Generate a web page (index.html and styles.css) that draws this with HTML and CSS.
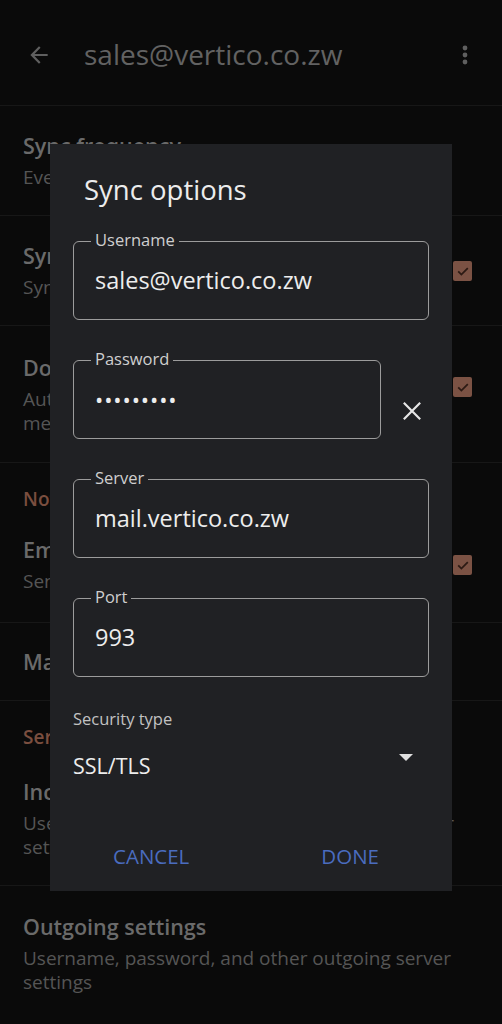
FILE: index.html
```html
<!DOCTYPE html>
<html>
<head>
<meta charset="utf-8">
<link rel="stylesheet" href="styles.css">
</head>
<body>
<div class="screen">
  <header class="appbar">
    <svg class="back" width="26" height="26" viewBox="0 0 24 24"><path d="M20 11H7.83l5.59-5.59L12 4l-8 8 8 8 1.41-1.41L7.83 13H20v-2z" fill="#5f5f5f"/></svg>
    <div class="appbar-title">sales@vertico.co.zw</div>
    <svg class="more" width="8" height="24" viewBox="0 0 8 24"><circle cx="4" cy="5" r="2.4" fill="#5f5f5f"/><circle cx="4" cy="12" r="2.4" fill="#5f5f5f"/><circle cx="4" cy="19" r="2.4" fill="#5f5f5f"/></svg>
  </header>

  <div class="row r-freq">
    <div class="row-text"><div class="row-title">Sync frequency</div><div class="row-sub">Every 15 minutes</div></div>
  </div>
  <div class="row r-sync">
    <div class="row-text"><div class="row-title">Sync email</div><div class="row-sub">Sync mail from this account</div></div>
    <span class="check"><svg width="20" height="20" viewBox="0 0 20 20"><path d="M4 10.5l4 4 8-8" stroke="#2c1a14" stroke-width="2.2" fill="none"/></svg></span>
  </div>
  <div class="row r-dl">
    <div class="row-text"><div class="row-title">Download attachments</div><div class="row-sub">Auto-download attachments to recent messages via Wi-Fi</div></div>
    <span class="check"><svg width="20" height="20" viewBox="0 0 20 20"><path d="M4 10.5l4 4 8-8" stroke="#2c1a14" stroke-width="2.2" fill="none"/></svg></span>
  </div>
  <div class="section">
    <div class="section-head">Notifications</div>
    <div class="row r-notif">
      <div class="row-text"><div class="row-title">Email notifications</div><div class="row-sub">Send notifications for new mail</div></div>
      <span class="check"><svg width="20" height="20" viewBox="0 0 20 20"><path d="M4 10.5l4 4 8-8" stroke="#2c1a14" stroke-width="2.2" fill="none"/></svg></span>
    </div>
  </div>
  <div class="row r-labels">
    <div class="row-text"><div class="row-title">Manage labels</div></div>
  </div>
  <div class="section">
    <div class="section-head">Server settings</div>
    <div class="row r-in">
      <div class="row-text"><div class="row-title">Incoming settings</div><div class="row-sub">Username, password, and other incoming server settings</div></div>
    </div>
  </div>
  <div class="row r-out">
    <div class="row-text"><div class="row-title">Outgoing settings</div><div class="row-sub">Username, password, and other outgoing server settings</div></div>
  </div>

  <div class="dialog">
    <h2 class="dialog-title">Sync options</h2>
    <div class="fields">
      <div class="field"><span class="field-label">Username</span><span class="field-value">sales@vertico.co.zw</span></div>
      <div class="field-row">
        <div class="field short"><span class="field-label">Password</span><span class="field-value dots">•••••••••</span></div>
        <svg class="clear" width="22" height="22" viewBox="0 0 22 22"><path d="M2 2L20 20M20 2L2 20" stroke="#e6e6e6" stroke-width="2.4"/></svg>
      </div>
      <div class="field"><span class="field-label">Server</span><span class="field-value">mail.vertico.co.zw</span></div>
      <div class="field"><span class="field-label">Port</span><span class="field-value">993</span></div>
    </div>
    <div class="security">
      <div class="sec-label">Security type</div>
      <div class="sec-select"><span class="sec-value">SSL/TLS</span><svg width="14" height="8" viewBox="0 0 14 8"><path d="M0 0h14L7 7z" fill="#e0e0e0"/></svg></div>
    </div>
    <div class="actions">
      <span class="btn cancel">CANCEL</span>
      <span class="btn done">DONE</span>
    </div>
  </div>
</div>
</body>
</html>
```

FILE: styles.css
```css
* { box-sizing: border-box; }
html, body { margin: 0; padding: 0; background: #0a0a0a; }
body { font-family: "Open Sans", Roboto, sans-serif; }
.screen { position: relative; width: 502px; height: 1024px; overflow: hidden; background: #0a0a0a; }

.appbar { height: 106px; display: flex; align-items: center; padding: 0 0 0 26px; border-bottom: 1px solid #171717; }
.back { margin-top: 4px; }
.appbar-title { margin-left: 32px; font-size: 28px; color: #626262; flex: 1; margin-top: 2px; }
.more { margin-right: 33px; margin-top: 4px; }

.row { display: flex; align-items: center; padding: 0 30px 0 23px; border-bottom: 1px solid #171717; }
.row-text { flex: 1; }
.row-title { font-size: 21.5px; color: #6a6a6a; font-weight: 600; line-height: 28px; }
.row-sub { font-size: 19px; color: #555; line-height: 24px; margin-top: 5px; }
.check { width: 19px; height: 20px; background: #7b5244; border-radius: 2px; display: flex; align-items: center; justify-content: center; }
.check svg { width: 16px; height: 16px; }

.r-freq { height: 110px; }
.r-sync { height: 110px; }
.r-dl { height: 137px; }
.r-dl .row-sub { max-width: 345px; }
.r-dl .check { margin-top: -14px; }
.section-head { font-size: 19px; color: #7a4e3f; font-weight: 600; padding: 22px 23px 0; line-height: 28px; }
.r-notif { height: 110px; padding-bottom: 6px; }
.r-labels { height: 78px; }
.section:last-of-type .section-head { padding-top: 26px; }
.r-in { height: 135px; padding-right: 20px; }
.r-out { height: 137px; border-bottom: none; align-items: flex-start; padding-top: 27px; }

.dialog { position: absolute; left: 50px; top: 144px; width: 402px; height: 747px; background: #202124; padding: 28px 23px 0; }
.dialog-title { margin: 0 0 0 11px; font-size: 27.5px; font-weight: 400; color: #ececec; line-height: 36px; }
.fields { display: flex; flex-direction: column; gap: 40px; margin-top: 33px; }
.field { position: relative; height: 79px; border: 1.5px solid #9c9c9c; border-radius: 6px; display: flex; align-items: center; padding-left: 21px; }
.field.short { width: 308px; }
.field-row { display: flex; align-items: center; gap: 21px; }
.clear { margin-top: 22px; width: 20px; height: 20px; }
.field-label { position: absolute; top: -12px; left: 17px; padding: 0 4px; background: #202124; font-size: 16.5px; line-height: 20px; color: #cfcfcf; }
.field-value { font-size: 23.5px; color: #ededed; margin-top: -2px; }
.dots { letter-spacing: 0.9px; font-size: 22px; margin-top: -2px; }

.security { margin-top: 31px; }
.sec-label { font-size: 16.5px; color: #c2c2c2; line-height: 22px; }
.sec-select { display: flex; align-items: center; justify-content: space-between; margin-top: 21px; padding-right: 16px; }
.sec-value { font-size: 21.5px; color: #ededed; }
.sec-select svg { margin-top: -16px; }

.actions { display: flex; justify-content: space-between; padding: 0 50px 0 40px; margin-top: 62px; }
.btn { font-size: 20.5px; color: #4a6cbf; font-weight: 400; letter-spacing: 0; }
```
